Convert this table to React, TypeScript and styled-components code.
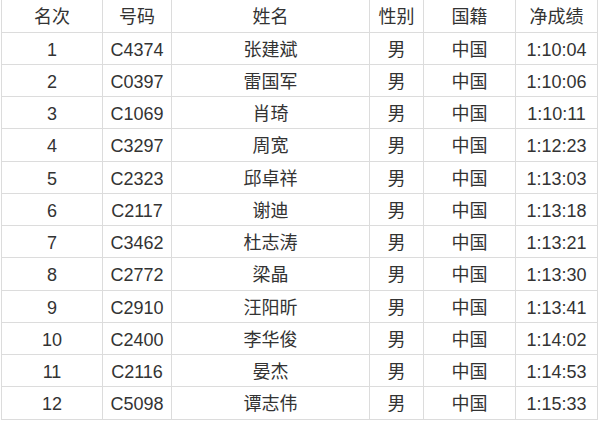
import React from "react";
import styled, { createGlobalStyle } from "styled-components";

const GlobalStyle = createGlobalStyle`
  html, body {
    margin: 0;
    padding: 0;
    background: #fff;
  }
  body {
    font-family: "Liberation Sans", "Noto Sans CJK SC", sans-serif;
    color: #333;
  }
`;

const COLUMNS = [
  { title: "名次", width: 101 },
  { title: "号码", width: 69 },
  { title: "姓名", width: 198 },
  { title: "性别", width: 54 },
  { title: "国籍", width: 92 },
  { title: "净成绩", width: 82 },
];

const RESULTS = [
  { rank: 1, bib: "C4374", name: "张建斌", time: "1:10:04" },
  { rank: 2, bib: "C0397", name: "雷国军", time: "1:10:06" },
  { rank: 3, bib: "C1069", name: "肖琦", time: "1:10:11" },
  { rank: 4, bib: "C3297", name: "周宽", time: "1:12:23" },
  { rank: 5, bib: "C2323", name: "邱卓祥", time: "1:13:03" },
  { rank: 6, bib: "C2117", name: "谢迪", time: "1:13:18" },
  { rank: 7, bib: "C3462", name: "杜志涛", time: "1:13:21" },
  { rank: 8, bib: "C2772", name: "梁晶", time: "1:13:30" },
  { rank: 9, bib: "C2910", name: "汪阳昕", time: "1:13:41" },
  { rank: 10, bib: "C2400", name: "李华俊", time: "1:14:02" },
  { rank: 11, bib: "C2116", name: "晏杰", time: "1:14:53" },
  { rank: 12, bib: "C5098", name: "谭志伟", time: "1:15:33" },
];

const App = () => {
  return (
    <Page>
      <GlobalStyle />
      <Table>
        <colgroup>
          {COLUMNS.map((c) => (
            <col key={`col_${c.title}`} style={{ width: c.width }} />
          ))}
        </colgroup>
        <thead>
          <HeadRow>
            {COLUMNS.map((c) => (
              <HeadCell key={`head_${c.title}`}>{c.title}</HeadCell>
            ))}
          </HeadRow>
        </thead>
        <tbody>
          {RESULTS.map((r) => (
            <Row key={`row_${r.rank}`}>
              <Cell>{r.rank}</Cell>
              <Cell>{r.bib}</Cell>
              <Cell>{r.name}</Cell>
              <Cell>男</Cell>
              <Cell>中国</Cell>
              <Cell>{r.time}</Cell>
            </Row>
          ))}
        </tbody>
      </Table>
    </Page>
  );
};

const Page = styled.div`
  width: 600px;
  height: 421px;
  padding-left: 1px;
  box-sizing: border-box;
  overflow: hidden;
`;
const Table = styled.table`
  width: 597px;
  border-collapse: collapse;
  table-layout: fixed;
  font-size: 18px;
  color: #333;
`;
const HeadRow = styled.tr`
  height: 32px;
`;
const Row = styled.tr`
  height: 32.25px;
`;
const HeadCell = styled.th`
  font-weight: normal;
  padding: 2px 0 0;
  text-align: center;
  vertical-align: middle;
  line-height: 20px;
  border-left: 1px solid #dcdcdc;
  border-right: 1px solid #dcdcdc;
  border-bottom: 1px solid #dcdcdc;
`;
const Cell = styled.td`
  padding: 3px 0 0;
  text-align: center;
  vertical-align: middle;
  line-height: 20px;
  border: 1px solid #dcdcdc;
  white-space: nowrap;
`;

export default App;
